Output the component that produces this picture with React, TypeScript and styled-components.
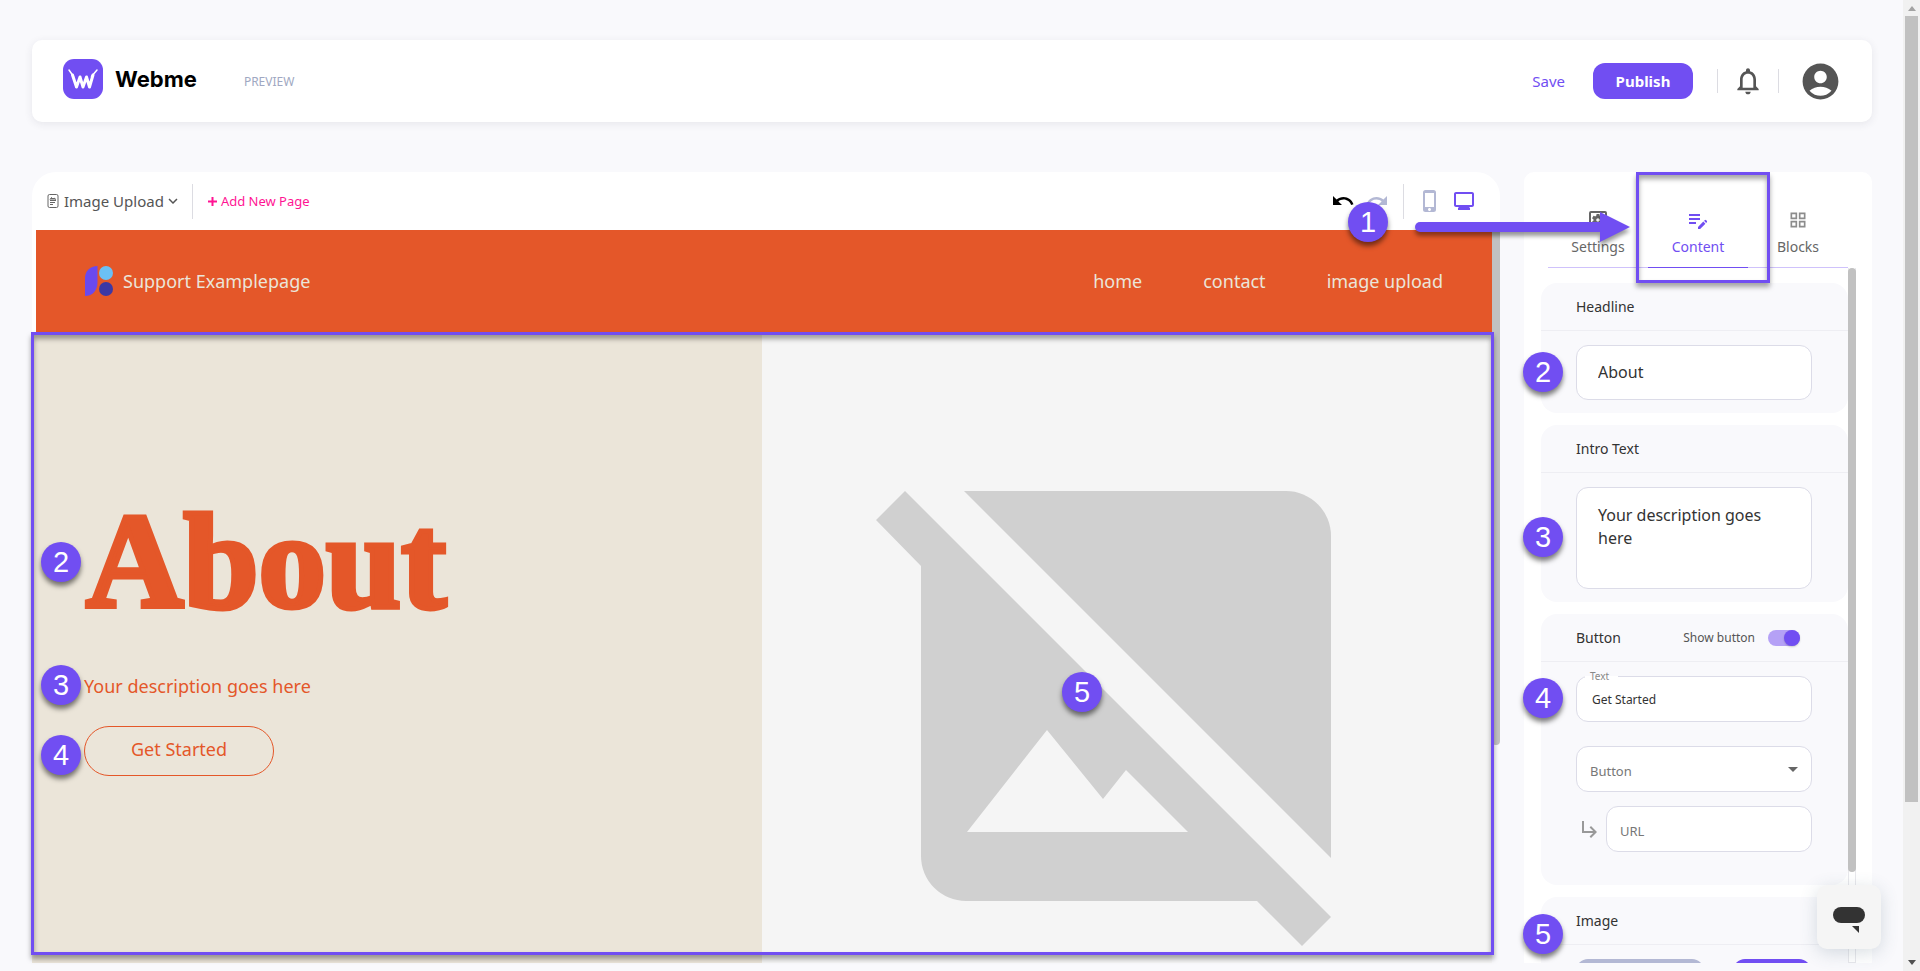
import React from "react";
import styled, { createGlobalStyle, css } from "styled-components";
import {
  MdNotificationsNone,
  MdAccountCircle,
  MdUndo,
  MdRedo,
  MdPhoneIphone,
  MdMonitor,
  MdEditNote,
  MdGridView,
  MdOutlineSettingsApplications,
  MdSubdirectoryArrowRight,
  MdArrowDropDown,
  MdKeyboardArrowDown,
} from "react-icons/md";

const c = {
  purple: "#714ef2",
  orange: "#e45729",
  cream: "#ebe5d9",
  page: "#f9f9fc",
  line: "#dcdce8",
  muted: "#b3b8d4",
  text: "#555555",
  dark: "#333333",
  bar: "#c1c1c1",
};

const GlobalStyle = createGlobalStyle`
  *, *::before, *::after { box-sizing: border-box; }
  body { margin: 0; background: ${c.page}; font-family: "Noto Sans", sans-serif; color: ${c.dark}; }
  button, input, select, textarea { font-family: inherit; margin: 0; }
  button { border: 0; background: none; padding: 0; cursor: pointer; }
  a { text-decoration: none; }
  svg { display: block; flex: none; }
`;

const Shell = styled.div`
  display: grid;
  grid-template-columns: minmax(0, 1fr) 17px;
  height: 100vh;
  overflow: hidden;
`;

const Page = styled.div`
  display: flex;
  flex-direction: column;
  min-height: 0;
  padding: 40px 31px 8px 32px;
`;

const WindowScroll = styled.div`
  display: flex;
  flex-direction: column;
  align-items: center;
  justify-content: space-between;
  background: #f1f1f1;
  padding: 6px 0;
`;

const WindowThumb = styled.div`
  width: 13px;
  height: 82%;
  margin: 5px 0 auto;
  background: ${c.bar};
`;

const Caret = styled.span<{ $down?: boolean }>`
  border: 4px solid transparent;
  border-top-width: ${(p) => (p.$down ? "5px" : "0")};
  border-bottom-width: ${(p) => (p.$down ? "0" : "5px")};
  border-top-color: ${(p) => (p.$down ? "#505050" : "transparent")};
  border-bottom-color: ${(p) => (p.$down ? "transparent" : "#a3a3a3")};
`;

const Header = styled.header`
  display: flex;
  align-items: center;
  height: 82px;
  padding: 0 30px 0 31px;
  background: #fff;
  border-radius: 10px;
  box-shadow: 0 2px 8px rgba(40, 40, 70, 0.09);
`;

const Brand = styled.a`
  display: flex;
  align-items: center;
  gap: 12px;
  padding-bottom: 4px;
  color: #000;
  font: 700 22px/28px Inter, sans-serif;
`;

const PreviewLink = styled.a`
  margin-left: 47px;
  padding-top: 2px;
  color: #a0a8c2;
  font-size: 12px;
  line-height: 16px;
`;

const HeaderActions = styled.div`
  display: flex;
  align-items: center;
  margin-left: auto;
`;

const SaveButton = styled.button`
  color: ${c.purple};
  font-size: 15px;
  line-height: 20px;
  margin-right: 28px;
`;

const PublishButton = styled.button`
  width: 100px;
  height: 36px;
  margin-right: 24px;
  border-radius: 12px;
  background: ${c.purple};
  color: #fff;
  font-size: 15px;
  font-weight: 700;
`;

const IconButton = styled.button<{ $color?: string }>`
  display: flex;
  color: ${(p) => p.$color || c.text};
`;

const Divider = styled.span<{ $h: number }>`
  width: 1px;
  height: ${(p) => p.$h}px;
  background: #dcdce2;
`;

const HeaderIcons = styled.div`
  display: flex;
  align-items: center;
  gap: 14px;
  ${IconButton}:last-child { margin-left: 6px; }
`;

const Workspace = styled.main`
  flex: 1;
  min-height: 0;
  display: grid;
  grid-template-columns: minmax(0, 1fr) 348px;
  gap: 24px;
  margin-top: 50px;
`;

const Editor = styled.section`
  display: flex;
  flex-direction: column;
  min-height: 0;
`;

const Toolbar = styled.div`
  display: flex;
  align-items: center;
  height: 58px;
  padding: 0 24px 0 15px;
  background: #fff;
  border-radius: 24px 24px 0 0;
`;

const PagePicker = styled.button`
  display: flex;
  align-items: center;
  margin-right: 10px;
  color: ${c.text};
  font-size: 15px;
  line-height: 20px;
  svg:first-child { margin-right: 5px; }
`;

const AddPage = styled.button`
  display: flex;
  align-items: center;
  gap: 4px;
  margin-left: 15px;
  color: #ff1493;
  font-size: 13px;
  line-height: 18px;
`;

const ToolIcons = styled.div`
  display: flex;
  align-items: center;
  gap: 14px;
  margin-left: auto;
`;

const ToolGroup = styled.div`
  display: flex;
  gap: 10px;
`;

const Preview = styled.div`
  position: relative;
  flex: 1;
  min-height: 0;
  display: grid;
  grid-template-columns: minmax(0, 1fr) 8px;
  background: ${c.page};
`;

const PreviewThumb = styled.div`
  height: 515px;
  background: ${c.bar};
  border-radius: 0 0 4px 4px;
`;

const Site = styled.div`
  display: flex;
  flex-direction: column;
  min-height: 0;
  overflow: hidden;
`;

const SiteHeader = styled.div`
  display: flex;
  flex: none;
  align-items: center;
  justify-content: space-between;
  height: 102px;
  padding: 0 49px;
  border-left: 4px solid #fff;
  background: ${c.orange};
  background-clip: padding-box;
`;

const SiteBrand = styled.a`
  display: flex;
  align-items: center;
  gap: 10px;
  color: ${c.cream};
  font-size: 18px;
  line-height: 26px;
`;

const SiteNav = styled.nav`
  display: flex;
  gap: 61px;
  a { color: ${c.cream}; font-size: 18px; line-height: 26px; }
`;

const Hero = styled.div`
  display: grid;
  grid-template-columns: 1fr 1fr;
  flex: none;
  height: 772px;
`;

const HeroText = styled.div`
  position: relative;
  display: flex;
  flex-direction: column;
  align-items: flex-start;
  padding: 155px 52px 0;
  background: ${c.cream};
  color: ${c.orange};
`;

const HeroTitle = styled.h1`
  margin: 0;
  padding-left: 2px;
  font: 700 135px/150px "Liberation Serif", serif;
  -webkit-text-stroke: 5px ${c.orange};
  stroke-linejoin: round;
`;

const HeroLine = styled.p`
  margin: 36px 0 27px;
  font-size: 18px;
  line-height: 26px;
`;

const HeroButton = styled.button`
  height: 50px;
  padding: 0 46px 4px;
  border: 1px solid ${c.orange};
  border-radius: 25px;
  color: ${c.orange};
  font-size: 18px;
  line-height: 26px;
`;

const HeroImage = styled.div`
  position: relative;
  display: flex;
  align-items: center;
  justify-content: center;
  background: #f5f5f5;
`;

const Frame = styled.div`
  position: absolute;
  border: 3px solid ${c.purple};
  box-shadow: 0 4px 5px rgba(0, 0, 0, 0.35), inset 0 4px 5px rgba(0, 0, 0, 0.35);
  pointer-events: none;
`;

const HeroFrame = styled(Frame)`
  top: 102px;
  right: 6px;
  bottom: 8px;
  left: -1px;
`;

const TabFrame = styled(Frame)`
  z-index: 2;
  top: 0;
  left: 112px;
  width: 134px;
  height: 111px;
`;

const Badge = styled.span<{ $x: string; $y: number }>`
  position: absolute;
  z-index: 3;
  left: ${(p) => p.$x};
  top: ${(p) => p.$y}px;
  display: flex;
  align-items: center;
  justify-content: center;
  width: 40px;
  height: 40px;
  border-radius: 50%;
  background: ${c.purple};
  box-shadow: 0 4px 5px rgba(0, 0, 0, 0.5);
  color: #fff;
  font: 29px/40px "Liberation Sans", sans-serif;
`;

const Pointer = styled.svg`
  position: absolute;
  z-index: 3;
  top: 36px;
  left: -112px;
  overflow: visible;
  filter: drop-shadow(0 4px 2px rgba(0, 0, 0, 0.4));
`;

const Sidebar = styled.aside`
  position: relative;
  display: flex;
  flex-direction: column;
  min-height: 0;
  background: #fff;
  border-radius: 10px 10px 0 0;
`;

const Tabs = styled.div`
  display: grid;
  grid-template-columns: repeat(3, 1fr);
  flex: none;
  margin: 0 24px;
`;

const Tab = styled.button<{ $active?: boolean }>`
  display: flex;
  flex-direction: column;
  align-items: center;
  gap: 5px;
  height: 96px;
  padding-top: 36px;
  border-bottom: 1px solid ${(p) => (p.$active ? c.purple : "#cfc2fb")};
  color: ${(p) => (p.$active ? c.purple : "#666")};
  font-size: 14px;
  line-height: 20px;
`;

const TabIcon = styled.span<{ $soft?: boolean }>`
  display: flex;
  align-items: center;
  height: 24px;
  color: ${(p) => (p.$soft ? "#8c8c8c" : "inherit")};
`;

const ScrollArea = styled.div`
  flex: 1;
  min-height: 0;
  display: grid;
  grid-template-columns: minmax(0, 1fr) 8px;
  margin: 0 16px 0 -8px;
  padding-left: 25px;
  overflow: hidden;
`;

const ScrollTrack = styled.div`
  border: 1px solid #e8e8ec;
  border-top: 0;
`;

const ScrollThumb = styled.div`
  height: 604px;
  margin: 0 -1px;
  border-radius: 4px;
  background: ${c.bar};
`;

const Cards = styled.div`
  display: flex;
  flex-direction: column;
  gap: 12px;
  padding-top: 15px;
  min-height: 0;
`;

const Card = styled.section<{ $end?: number }>`
  position: relative;
  flex: none;
  padding-bottom: ${(p) => p.$end ?? 13}px;
  border-radius: 16px;
  background: ${c.page};
`;

const CardHead = styled.div`
  display: flex;
  align-items: center;
  justify-content: space-between;
  height: 48px;
  padding: 0 48px 0 35px;
  border-bottom: 1px solid #eeeef3;
  h2 { margin: 0; font-size: 14px; font-weight: 400; line-height: 20px; }
`;

const CardBody = styled.div`
  display: flex;
  flex-direction: column;
  padding: 14px 36px 0 35px;
`;

const box = css`
  display: block;
  width: 100%;
  border: 1px solid ${c.line};
  border-radius: 12px;
  background: #fff;
  color: ${c.dark};
  outline: none;
`;

const BigInput = styled.input`
  ${box}
  height: 55px;
  padding: 0 21px 2px;
  font-size: 16px;
`;

const BigText = styled.textarea`
  ${box}
  height: 102px;
  padding: 16px 21px;
  font-size: 16px;
  line-height: 23px;
  resize: none;
  overflow: hidden;
`;

const SmallInput = styled.input`
  ${box}
  height: 46px;
  padding: 3px 13px 0;
  font-size: 13px;
  &::placeholder { color: #777; opacity: 1; }
`;

const NotchedField = styled.div`
  position: relative;
  margin-bottom: 24px;
  input { font-size: 12px; padding: 0 15px; }
  label {
    position: absolute;
    top: -7px;
    left: 9px;
    padding: 0 9px 0 5px;
    background: linear-gradient(${c.page} 50%, #fff 50%);
    color: #888;
    font-size: 10px;
    line-height: 14px;
  }
`;

const SelectField = styled.div`
  position: relative;
  margin-bottom: 14px;
  select {
    ${box}
    height: 46px;
    padding: 3px 13px 0;
    appearance: none;
    color: #777;
    font-size: 13px;
  }
  svg { position: absolute; top: 11px; right: 7px; color: #666; pointer-events: none; }
`;

const UrlRow = styled.div`
  display: flex;
  align-items: center;
  gap: 4px;
  padding-left: 2px;
  color: #999;
`;

const SwitchLabel = styled.label`
  display: flex;
  align-items: center;
  gap: 13px;
  color: ${c.text};
  font-size: 12px;
  line-height: 16px;
  input {
    appearance: none;
    width: 32px;
    height: 16px;
    border-radius: 8px;
    background: #b5a1f6;
  }
  input::after {
    content: "";
    display: block;
    width: 16px;
    height: 16px;
    margin-left: auto;
    border-radius: 50%;
    background: ${c.purple};
    box-shadow: 0 1px 2px rgba(0, 0, 0, 0.2);
  }
`;

const ImageActions = styled.div`
  display: flex;
  justify-content: space-between;
  padding-right: 1px;
`;

const ImageAction = styled.button<{ $w: number; $bg: string }>`
  width: ${(p) => p.$w}px;
  height: 36px;
  border-radius: 12px;
  background: ${(p) => p.$bg};
`;

const ChatButton = styled.button`
  position: fixed;
  z-index: 4;
  right: 39px;
  bottom: 22px;
  display: flex;
  align-items: center;
  justify-content: center;
  width: 64px;
  height: 64px;
  border-radius: 10px;
  background: #f5f5f5;
  box-shadow: 0 4px 18px rgba(60, 90, 110, 0.2);
`;

function WebmeLogo() {
  return (
    <svg width="40" height="40" viewBox="0 0 40 40" aria-hidden="true">
      <rect width="40" height="40" rx="11" fill={c.purple} />
      <path
        d="M6 11L10.500 17.500M34 11L28.500 17.500"
        fill="none"
        stroke="#fff"
        strokeWidth="1.500"
        strokeLinecap="round"
      />
      <path
        d="M9.500 16l4 12L17 18l3 10 3.500-10 3 10 3.500-12M13.500 28L17 18"
        fill="none"
        stroke="#fff"
        strokeWidth="3"
        strokeLinecap="round"
        strokeLinejoin="round"
      />
    </svg>
  );
}

function PageIcon() {
  return (
    <svg width="12" height="16" viewBox="0 0 12 16" fill="none" stroke="#666" aria-hidden="true">
      <rect x="1" y="1.500" width="10" height="13" rx="1.500" />
      <path d="M3 7.500h6M3 9.500h5M3 11.500h3" />
      <path d="M3 6.500l1.500-2L6 6l1-1 2 1.500" fill="#666" />
    </svg>
  );
}

function SiteLogo() {
  return (
    <svg width="28" height="30" viewBox="0 0 28 30" aria-hidden="true">
      <path d="M0 30V12C0 5 5 0 12.500 0v16C12.500 24 8 30 0 30z" fill="#6a49ee" />
      <circle cx="21" cy="7" r="7" fill="#6bc0f5" />
      <circle cx="21" cy="23" r="7" fill="#3c38a5" />
    </svg>
  );
}

function MissingImage() {
  return (
    <svg width="502" height="455" viewBox="0 0 502 455" fill="#d0d0d0" role="img" aria-label="No image">
      <path d="M88 0H410A45 45 0 0 1 455 45V367Z" />
      <path
        fillRule="evenodd"
        d="M29 0L455 426L426 455L381 410H90A45 45 0 0 1 45 365V75L0 29ZM91 341H312L250 279L227 308L171 239Z"
      />
    </svg>
  );
}

export default function App() {
  return (
    <>
      <GlobalStyle />
      <Shell>
        <Page>
          <Header>
            <Brand href="#">
              <WebmeLogo />
              Webme
            </Brand>
            <PreviewLink href="#preview">PREVIEW</PreviewLink>
            <HeaderActions>
              <SaveButton>Save</SaveButton>
              <PublishButton>Publish</PublishButton>
              <HeaderIcons>
                <Divider $h={24} />
                <IconButton aria-label="Notifications"><MdNotificationsNone size={32} /></IconButton>
                <Divider $h={24} />
                <IconButton aria-label="Account"><MdAccountCircle size={43} /></IconButton>
              </HeaderIcons>
            </HeaderActions>
          </Header>

          <Workspace>
            <Editor>
              <Toolbar>
                <PagePicker>
                  <PageIcon />
                  Image Upload
                  <MdKeyboardArrowDown size={18} />
                </PagePicker>
                <Divider $h={35} />
                <AddPage>
                  <svg width="9" height="9" viewBox="0 0 9 9" aria-hidden="true">
                    <path d="M4.500 0v9M0 4.500h9" stroke="#ff1493" strokeWidth="2" />
                  </svg>
                  Add New Page
                </AddPage>
                <ToolIcons>
                  <ToolGroup>
                    <IconButton aria-label="Undo" $color="#000"><MdUndo size={24} /></IconButton>
                    <IconButton aria-label="Redo" $color={c.muted}><MdRedo size={24} /></IconButton>
                  </ToolGroup>
                  <Divider $h={35} />
                  <ToolGroup>
                    <IconButton aria-label="Phone view" $color={c.muted}><MdPhoneIphone size={24} /></IconButton>
                    <IconButton aria-label="Desktop view" $color={c.purple}><MdMonitor size={24} /></IconButton>
                  </ToolGroup>
                </ToolIcons>
              </Toolbar>
              <Preview>
                <Site>
                  <SiteHeader>
                    <SiteBrand href="#site">
                      <SiteLogo />
                      Support Examplepage
                    </SiteBrand>
                    <SiteNav>
                      <a href="#home">home</a>
                      <a href="#contact">contact</a>
                      <a href="#image-upload">image upload</a>
                    </SiteNav>
                  </SiteHeader>
                  <Hero>
                    <HeroText>
                      <HeroTitle>About</HeroTitle>
                      <HeroLine>Your description goes here</HeroLine>
                      <HeroButton>Get Started</HeroButton>
                      <Badge $x="9px" $y={210}>2</Badge>
                      <Badge $x="9px" $y={333}>3</Badge>
                      <Badge $x="9px" $y={403}>4</Badge>
                    </HeroText>
                    <HeroImage>
                      <MissingImage />
                      <Badge $x="calc(50% - 65px)" $y={340}>5</Badge>
                    </HeroImage>
                  </Hero>
                </Site>
                <PreviewThumb />
                <HeroFrame />
              </Preview>
            </Editor>

            <Sidebar>
              <Tabs role="tablist">
                <Tab role="tab" aria-selected="false">
                  <TabIcon><MdOutlineSettingsApplications size={24} /></TabIcon>
                  Settings
                </Tab>
                <Tab role="tab" aria-selected="true" $active>
                  <TabIcon><MdEditNote size={24} /></TabIcon>
                  Content
                </Tab>
                <Tab role="tab" aria-selected="false">
                  <TabIcon $soft><MdGridView size={20} /></TabIcon>
                  Blocks
                </Tab>
              </Tabs>
              <TabFrame />
              <Badge $x="-176px" $y={30}>1</Badge>
              <Pointer width="220" height="38" viewBox="0 0 220 38" fill={c.purple} aria-hidden="true">
                <rect x="3" y="14" width="196" height="10" rx="5" />
                <path d="M188 4L218 19L188 34Z" />
              </Pointer>

              <ScrollArea>
                <Cards>
                  <Card>
                    <CardHead><h2><label htmlFor="headline">Headline</label></h2></CardHead>
                    <CardBody><BigInput id="headline" defaultValue="About" /></CardBody>
                    <Badge $x="-18px" $y={69}>2</Badge>
                  </Card>
                  <Card>
                    <CardHead><h2><label htmlFor="intro">Intro Text</label></h2></CardHead>
                    <CardBody><BigText id="intro" defaultValue="Your description goes here" /></CardBody>
                    <Badge $x="-18px" $y={92}>3</Badge>
                  </Card>
                  <Card $end={33}>
                    <CardHead>
                      <h2>Button</h2>
                      <SwitchLabel>
                        Show button
                        <input type="checkbox" role="switch" defaultChecked />
                      </SwitchLabel>
                    </CardHead>
                    <CardBody>
                      <NotchedField>
                        <SmallInput id="button-text" defaultValue="Get Started" />
                        <label htmlFor="button-text">Text</label>
                      </NotchedField>
                      <SelectField>
                        <select aria-label="Button type" defaultValue="button">
                          <option value="button">Button</option>
                          <option value="link">Link</option>
                        </select>
                        <MdArrowDropDown size={24} />
                      </SelectField>
                      <UrlRow>
                        <MdSubdirectoryArrowRight size={24} />
                        <SmallInput aria-label="URL" placeholder="URL" />
                      </UrlRow>
                    </CardBody>
                    <Badge $x="-18px" $y={64}>4</Badge>
                  </Card>
                  <Card>
                    <CardHead><h2>Image</h2></CardHead>
                    <CardBody>
                      <ImageActions>
                        <ImageAction $w={128} $bg={c.muted} aria-label="Remove image" />
                        <ImageAction $w={78} $bg={c.purple} aria-label="Upload image" />
                      </ImageActions>
                    </CardBody>
                    <Badge $x="-18px" $y={17}>5</Badge>
                  </Card>
                </Cards>
                <ScrollTrack><ScrollThumb /></ScrollTrack>
              </ScrollArea>
            </Sidebar>
          </Workspace>
        </Page>
        <WindowScroll aria-hidden="true">
          <Caret />
          <WindowThumb />
          <Caret $down />
        </WindowScroll>
      </Shell>
      <ChatButton aria-label="Open chat">
        <svg width="32" height="32" viewBox="0 0 32 32" fill="#333" aria-hidden="true">
          <rect y="6" width="32" height="16" rx="8" />
          <path d="M19 25h7v7z" />
        </svg>
      </ChatButton>
    </>
  );
}
